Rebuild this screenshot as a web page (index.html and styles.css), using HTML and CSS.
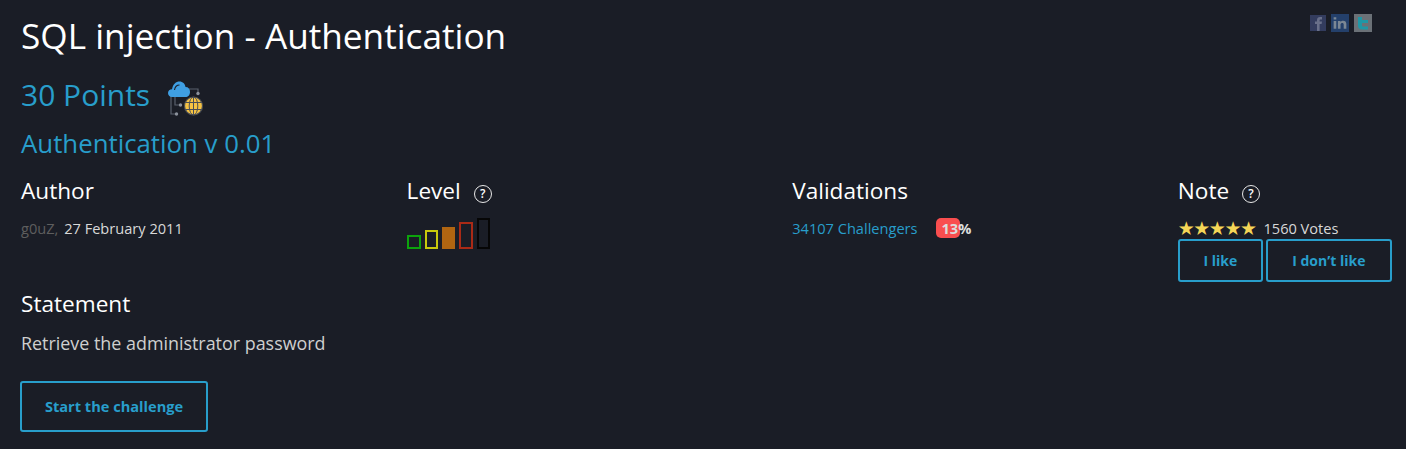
FILE: index.html
```html
<!DOCTYPE html>
<html lang="en">
<head>
    <meta charset="UTF-8">
    <title>SQL injection - Authentication</title>
    <link rel="stylesheet" href="styles.css">
</head>
<body>
    <div class="container">
        <div class="share">
            <svg class="share-icon" width="16" height="16" viewBox="0 0 16 16">
                <rect width="16" height="16" fill="#333c5e"/>
                <path d="M7 16V9H5V6.500H7V5C7 3 8.200 2 10 2H12V4.500H10.500C9.800 4.500 9.600 4.800 9.600 5.400V6.500H12L11.600 9H9.600V16Z" fill="#69708a"/>
            </svg>
            <svg class="share-icon" width="18" height="18" viewBox="0 0 17 17">
                <rect width="17" height="17" fill="#24406b"/>
                <path d="M2.500 6.500H5V14H2.500ZM2.500 3H5V5.200H2.500ZM6.500 6.500H9V7.500C9.600 6.700 10.400 6.300 11.500 6.300C13.400 6.300 14.500 7.400 14.500 9.500V14H12V10C12 9 11.500 8.500 10.700 8.500C9.800 8.500 9 9 9 10V14H6.500Z" fill="#7b8794"/>
            </svg>
            <svg class="share-icon" width="18" height="18" viewBox="0 0 18 18">
                <rect width="18" height="18" fill="#6b7177"/>
                <path d="M4 3H8V6H14V9H8V11C8 12 8.600 12.500 9.500 12.500H14V15.500H8.500C5.500 15.500 4 14 4 11.500Z" fill="#1f97a6"/>
            </svg>
        </div>

        <h1>SQL injection - Authentication</h1>
        <h2 class="points">30 Points
            <svg class="points-icon" width="38" height="38" viewBox="0 0 38 38">
                <g fill="none" stroke="#59606c" stroke-width="1.200">
                    <path d="M4 16V34H9"/>
                    <path d="M8 16V25H13"/>
                    <path d="M22 9H31V13"/>
                </g>
                <g fill="#8b919b">
                    <circle cx="9.500" cy="34" r="1.700"/>
                    <circle cx="13.500" cy="25" r="1.700"/>
                    <circle cx="31" cy="13.500" r="1.700"/>
                </g>
                <path d="M5 17C2.500 17 1 15 1 13C1 10.800 2.800 9.300 5 9.300C6 4 9 1.500 12.500 1.500C15.800 1.500 18 3.800 18.500 7C21.500 7 23 9 23 12C23 15 21 17 18.500 17Z" fill="#3f9fe3"/>
                <path d="M7.500 10C8 7 10 5 12.500 5" fill="none" stroke="#1a1d26" stroke-width="1.100"/>
                <circle cx="26.500" cy="26" r="9" fill="#f6c343" stroke="#4b4f55" stroke-width="1.200"/>
                <g fill="none" stroke="#4b4f55" stroke-width="1">
                    <ellipse cx="26.500" cy="26" rx="4.300" ry="9"/>
                    <path d="M26.500 17V35M18 22.500H35M18 29.500H35"/>
                </g>
            </svg>
        </h2>
        <h3 class="subtitle">Authentication v 0.01</h3>

        <div class="info-grid">
            <div>
                <h4>Author</h4>
                <p class="meta"><span class="author">g0uZ,</span> 27 February 2011</p>
            </div>
            <div>
                <h4>Level <span class="help">?</span></h4>
                <div class="levels">
                    <span class="bar bar-1"></span>
                    <span class="bar bar-2"></span>
                    <span class="bar bar-3"></span>
                    <span class="bar bar-4"></span>
                    <span class="bar bar-5"></span>
                </div>
            </div>
            <div>
                <h4>Validations</h4>
                <p class="meta"><span class="link">34107 Challengers</span><span class="badge">13%</span></p>
            </div>
            <div>
                <h4>Note <span class="help">?</span></h4>
                <p class="meta votes"><span class="stars">★★★★★</span> 1560 Votes</p>
                <div class="vote-buttons">
                    <button class="btn btn-like">I like</button>
                    <button class="btn btn-dislike">I don’t like</button>
                </div>
            </div>
        </div>

        <h4 class="statement-title">Statement</h4>
        <p class="statement">Retrieve the administrator password</p>
        <button class="btn btn-start">Start the challenge</button>
    </div>
</body>
</html>
```

FILE: styles.css
```css
body {
    font-family: "Open Sans", "Noto Sans", sans-serif;
    margin: 0;
    background-color: #1a1d26;
    color: #d8d8d8;
    height: 449px;
    overflow: hidden;
}
.container {
    position: relative;
    padding: 14px 14px 0 21px;
}
h1, h2, h3, h4, p {
    margin: 0;
    font-weight: 400;
}
h1 {
    font-size: 35.2px;
    line-height: 42px;
    color: #ffffff;
}
.points {
    display: flex;
    align-items: center;
    gap: 16px;
    margin-top: 20px;
    font-size: 30px;
    line-height: 38px;
    color: #289ecb;
}
.points-icon {
    margin: 4px 0 -4px 1px;
}
.subtitle {
    margin-top: 12px;
    font-size: 25.8px;
    line-height: 34px;
    color: #289ecb;
}
.share {
    position: absolute;
    top: 14px;
    right: 34px;
    display: flex;
    align-items: center;
    gap: 5px;
}
.info-grid {
    display: grid;
    grid-template-columns: repeat(3, 385.6px) 1fr;
    margin-top: 16px;
}
h4 {
    font-size: 22.6px;
    line-height: 30px;
    color: #ffffff;
}
.help {
    display: inline-block;
    width: 16px;
    height: 16px;
    margin-left: 7px;
    border: 1.5px solid #e8e8e8;
    border-radius: 50%;
    font-size: 12px;
    font-weight: 600;
    line-height: 16px;
    text-align: center;
    vertical-align: 1px;
}
.meta {
    margin-top: 12px;
    font-size: 14.6px;
    line-height: 20px;
}
.author {
    color: #5e5e5e;
    margin-right: 2px;
}
.link {
    color: #289ecb;
}
.badge {
    display: inline-block;
    margin-left: 18px;
    padding: 0 1px 0 6px;
    width: 17px;
    background-color: #f94e4f;
    border-radius: 5px;
    font-weight: 700;
    white-space: nowrap;
    color: #dddddd;
}
.levels {
    display: flex;
    align-items: flex-end;
    gap: 4px;
    margin-top: 11px;
    height: 32px;
}
.bar {
    display: block;
    box-sizing: border-box;
    width: 13px;
    border: 2px solid;
}
.bar-1 { width: 14px; height: 14px; border-color: #0ca30c; }
.bar-2 { height: 19px; border-color: #c9c90c; }
.bar-3 { height: 22px; border-color: #b06511; background-color: #b06511; }
.bar-4 { width: 14px; height: 27px; border-color: #aa2a16; }
.bar-5 { height: 31px; border-color: #060606; }
.votes {
    display: flex;
    align-items: center;
    gap: 8px;
}
.stars {
    color: #f5d657;
    font-family: "DejaVu Sans", sans-serif;
    font-size: 19px;
    letter-spacing: -1.5px;
    line-height: 20px;
}
.vote-buttons {
    display: flex;
    gap: 3px;
    margin-top: 1px;
}
.btn {
    box-sizing: border-box;
    padding: 0;
    background: transparent;
    border: 2px solid #289ecb;
    border-radius: 3px;
    color: #289ecb;
    font-family: inherit;
    font-size: 14px;
    font-weight: 700;
}
.btn-like {
    width: 85px;
    height: 43px;
}
.btn-dislike {
    width: 126px;
    height: 43px;
}
.statement-title {
    margin-top: 7px;
}
.statement {
    margin-top: 12px;
    font-size: 17.9px;
    line-height: 24px;
    color: #cfcfcf;
}
.btn-start {
    display: block;
    margin-top: 26px;
    margin-left: -1px;
    padding-bottom: 2px;
    width: 188px;
    height: 51px;
    font-size: 14.6px;
}
```
